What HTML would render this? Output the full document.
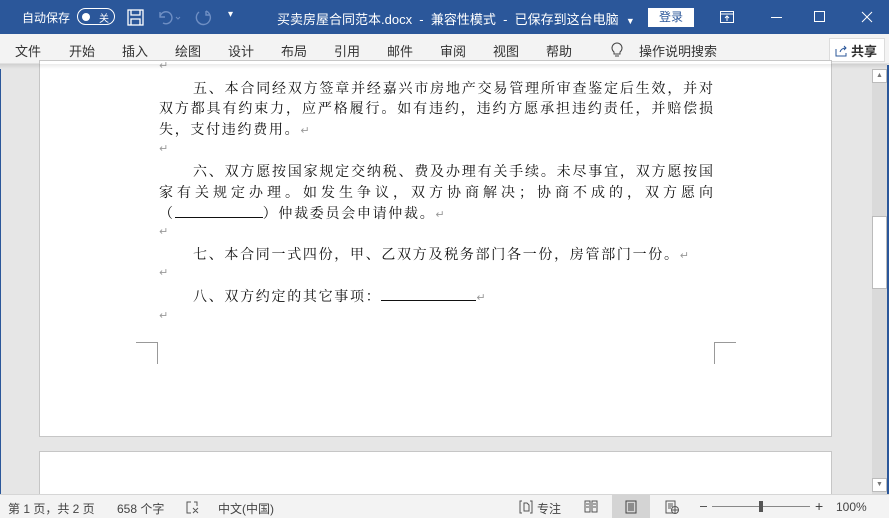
<!DOCTYPE html>
<html><head><meta charset="utf-8">
<style>
*{margin:0;padding:0;box-sizing:border-box}
body{width:889px;height:518px;overflow:hidden;position:relative;background:#e6e6e6;font-family:"Liberation Sans","Microsoft YaHei","Noto Sans CJK SC",sans-serif}
.abs{position:absolute}
#title{left:0;top:0;width:889px;height:34px;background:#2b579a;color:#fff;font-size:12px}
#rib{left:0;top:34px;width:889px;height:30px;background:#f3f3f3;font-size:13px;color:#333;border-bottom:1px solid #e0e0e0}
#rib span{position:absolute;top:7px}
.page{background:#fff;border:1px solid #c6c6c6}
.ln{position:absolute;left:159px;width:554px;font-family:"Noto Serif CJK SC","WenQuanYi Zen Hei",serif;font-size:14px;color:#111;line-height:20px;white-space:nowrap}
.j{text-align:justify;text-align-last:justify}
.ls{letter-spacing:1.7px}
.pm{color:#999;font-size:11px;font-family:"DejaVu Sans",sans-serif;letter-spacing:0}
.ul{display:inline-block;border-bottom:1px solid #111;height:14px;vertical-align:baseline}
#status{left:0;top:494px;width:889px;height:24px;background:#f3f3f3;border-top:1px solid #d6d6d6;font-size:12px;color:#444}
#status span{position:absolute;top:5px}
</style></head><body>
<div id="title" class="abs">
 <span class="abs" style="left:22px;top:9px">自动保存</span>
 <div class="abs" style="left:77px;top:8px;width:38px;height:17px;border:1.5px solid #fff;border-radius:9px"></div>
 <div class="abs" style="left:82px;top:13px;width:8px;height:8px;background:#fff;border-radius:50%"></div>
 <span class="abs" style="left:99px;top:10px;font-size:10px">关</span>
 <svg class="abs" style="left:127px;top:9px" width="17" height="17" viewBox="0 0 17 17" fill="none" stroke="#fff" stroke-width="1.3"><rect x="1" y="1" width="15" height="15"/><path d="M4 1v5h9V1M4 16v-6h9v6"/></svg>
 <svg class="abs" style="left:157px;top:9px" width="30" height="17" viewBox="0 0 30 17" fill="none" stroke="#6f8fc4" stroke-width="1.4"><path d="M3 3v5h5M3 8a6 6 0 1 1 3 6"/><path d="M19 8l2 2 2-2" stroke-width="1"/></svg>
 <svg class="abs" style="left:194px;top:9px" width="18" height="18" viewBox="0 0 18 18" fill="none" stroke="#6f8fc4" stroke-width="1.4"><path d="M12 2a7 7 0 1 1-7 1M12 2v4h4"/></svg>
 <span class="abs" style="left:228px;top:9px;font-size:10px">▾</span>
 <span class="abs" style="left:277px;top:9px;font-size:13px">买卖房屋合同范本.docx &nbsp;-&nbsp; 兼容性模式 &nbsp;-&nbsp; 已保存到这台电脑 &nbsp;<span style="font-size:9px">▼</span></span>
 <div class="abs" style="left:648px;top:8px;width:46px;height:19px;background:#fff;color:#2b579a;font-size:12px;text-align:center;line-height:19px">登录</div>
 <svg class="abs" style="left:720px;top:11px" width="14" height="12" viewBox="0 0 14 12" fill="none" stroke="#fff"><rect x="0.5" y="0.5" width="13" height="11"/><path d="M0.5 3h13M7 10V5M5 7l2-2 2 2"/></svg>
 <div class="abs" style="left:771px;top:17px;width:11px;height:1px;background:#fff"></div>
 <div class="abs" style="left:814px;top:11px;width:11px;height:11px;border:1px solid #fff"></div>
 <svg class="abs" style="left:861px;top:11px" width="12" height="12" viewBox="0 0 12 12" stroke="#fff"><path d="M1 1l10 10M11 1L1 11"/></svg>
</div>
<div id="rib" class="abs">
 <span style="left:15px">文件</span><span style="left:69px">开始</span><span style="left:122px">插入</span><span style="left:175px">绘图</span><span style="left:228px">设计</span><span style="left:281px">布局</span><span style="left:334px">引用</span><span style="left:387px">邮件</span><span style="left:440px">审阅</span><span style="left:493px">视图</span><span style="left:546px">帮助</span>
 <svg class="abs" style="left:610px;top:7px" width="14" height="17" viewBox="0 0 14 17" fill="none" stroke="#444"><path d="M4 11a5 5 0 1 1 6 0v2H4z M5 15h4"/></svg>
 <span style="left:639px">操作说明搜索</span>
 <div class="abs" style="left:829px;top:4px;width:56px;height:24px;background:#fff;border:1px solid #dcdcdc"></div>
 <svg class="abs" style="left:835px;top:10px" width="13" height="13" viewBox="0 0 13 13" fill="none" stroke="#2b579a"><path d="M1 5v7h10V9M5 8c1-3 3-4 6-4M9 2l2 2-2 2"/></svg>
 <span style="left:851px;font-weight:bold;color:#333">共享</span>
</div>
<div class="abs" style="left:0;top:65px;width:1px;height:429px;background:#2b579a"></div>
<div class="abs" style="left:887px;top:65px;width:2px;height:453px;background:#2b579a"></div>
<div class="abs" style="left:0;top:64px;width:887px;height:5px;background:linear-gradient(#d0d0d0,#e6e6e6)"></div>
<div class="abs page" style="left:39px;top:60px;width:793px;height:377px"></div>
<div class="abs page" style="left:39px;top:451px;width:793px;height:60px"></div>
<div class="abs" style="left:39px;top:64px;width:793px;height:5px;background:linear-gradient(rgba(0,0,0,0.08),rgba(0,0,0,0))"></div>
<div class="abs" style="left:872px;top:69px;width:15px;height:425px;background:#dadada"></div>
<div class="abs" style="left:872px;top:69px;width:15px;height:14px;background:#fff;border:1px solid #bbb;font-size:7px;color:#777;text-align:center;line-height:12px">▲</div>
<div class="abs" style="left:872px;top:216px;width:15px;height:73px;background:#fff;border:1px solid #bbb"></div>
<div class="abs" style="left:872px;top:478px;width:15px;height:14px;background:#fff;border:1px solid #bbb;font-size:7px;color:#777;text-align:center;line-height:12px">▼</div>
<div class="ln pm" style="top:56px;height:12px;overflow:hidden">↵</div>
<div class="ln j" style="top:78px;padding-left:34px">五、本合同经双方签章并经嘉兴市房地产交易管理所审查鉴定后生效，并对</div>
<div class="ln j" style="top:98px">双方都具有约束力，应严格履行。如有违约，违约方愿承担违约责任，并赔偿损</div>
<div class="ln ls" style="top:119px">失，支付违约费用。<span class="pm">↵</span></div>
<div class="ln pm" style="top:139px">↵</div>
<div class="ln j" style="top:161px;padding-left:34px">六、双方愿按国家规定交纳税、费及办理有关手续。未尽事宜，双方愿按国</div>
<div class="ln j" style="top:182px">家有关规定办理。如发生争议，双方协商解决；协商不成的，双方愿向</div>
<div class="ln ls" style="top:203px">（<span class="ul" style="width:88px"></span>）仲裁委员会申请仲裁。<span class="pm">↵</span></div>
<div class="ln pm" style="top:222px">↵</div>
<div class="ln ls" style="top:244px;padding-left:34px">七、本合同一式四份，甲、乙双方及税务部门各一份，房管部门一份。<span class="pm">↵</span></div>
<div class="ln pm" style="top:263px">↵</div>
<div class="ln ls" style="top:286px;padding-left:34px">八、双方约定的其它事项：<span class="ul" style="width:95px"></span><span class="pm">↵</span></div>
<div class="ln pm" style="top:306px">↵</div>
<div class="abs" style="left:136px;top:342px;width:22px;height:22px;border-top:1px solid #999;border-right:1px solid #999"></div>
<div class="abs" style="left:714px;top:342px;width:22px;height:22px;border-top:1px solid #999;border-left:1px solid #999"></div>
<div id="status" class="abs">
 <span style="left:8px">第 1 页，共 2 页</span><span style="left:117px">658 个字</span>
 <svg class="abs" style="left:186px;top:6px" width="14" height="13" viewBox="0 0 14 13" fill="none" stroke="#555"><path d="M5 1H1v11h4M8 1h3v4M7 7l5 5M12 7l-5 5"/></svg>
 <span style="left:218px">中文(中国)</span>
 <svg class="abs" style="left:519px;top:5px" width="14" height="14" viewBox="0 0 14 14" fill="none" stroke="#555"><path d="M3 1H1v12h2M11 1h2v12h-2M5 3h3l2 2v6H5z"/></svg>
 <span style="left:537px">专注</span>
 <svg class="abs" style="left:584px;top:5px" width="14" height="13" viewBox="0 0 14 13" fill="none" stroke="#555"><path d="M1 1h5v11H1zM8 1h5v11H8zM2 4h3M2 7h3M9 4h3M9 7h3"/></svg>
 <div class="abs" style="left:612px;top:0;width:38px;height:23px;background:#d4d4d4"></div>
 <svg class="abs" style="left:625px;top:5px" width="12" height="14" viewBox="0 0 12 14" fill="none" stroke="#444"><path d="M1 1h10v12H1zM3 4h6M3 6h6M3 8h6M3 10h6"/></svg>
 <svg class="abs" style="left:665px;top:5px" width="15" height="15" viewBox="0 0 15 15" fill="none" stroke="#555"><path d="M1 1h9v12H1zM3 4h5M3 6h5M3 8h3"/><circle cx="10" cy="10" r="3.5" fill="#f3f3f3"/><path d="M6.5 10h7M10 6.5v7"/></svg>
 <div class="abs" style="left:700px;top:11px;width:7px;height:1px;background:#555"></div>
 <div class="abs" style="left:712px;top:11px;width:98px;height:1px;background:#888"></div>
 <div class="abs" style="left:759px;top:6px;width:4px;height:11px;background:#555"></div>
 <span style="left:815px;top:3px;font-size:14px">+</span>
 <span style="left:836px">100%</span>
</div>
</body></html>
